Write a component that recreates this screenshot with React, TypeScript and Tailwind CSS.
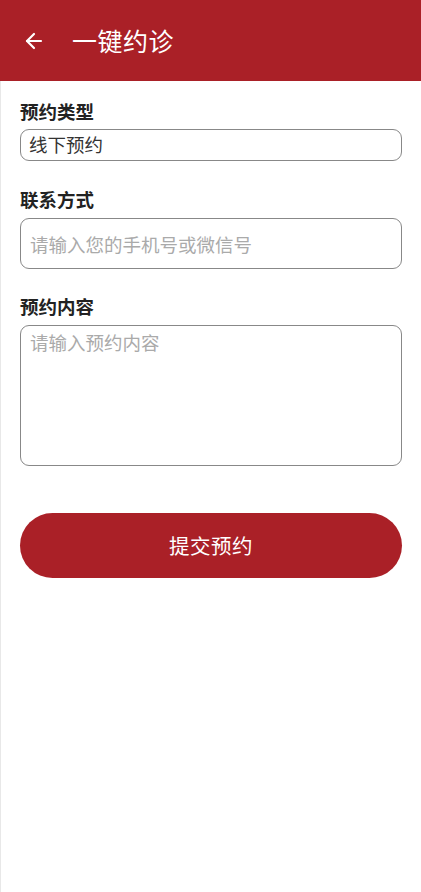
import { ArrowLeft } from "lucide-react";

const font = { fontFamily: '"Noto Sans CJK SC", "Noto Sans", sans-serif' };

export default function App() {
    return (
        <div className="min-h-[892px] w-[421px] bg-white flex flex-col" style={font}>
            <div className="h-[81px] bg-[#aa2027] flex items-center pl-[22px]">
                <ArrowLeft className="w-[24px] h-[24px] text-white" strokeWidth={2.2} />
                <h1 className="ml-[26px] text-white text-[25px] leading-none tracking-[0.5px]">一键约诊</h1>
            </div>

            <div className="flex-1 border-l border-[#e8e8e8] px-[19px] pt-[17px] flex flex-col">
                <label className="text-[18.5px] font-bold text-[#222] leading-[26px]">预约类型</label>
                <div className="mt-[5px] h-[32px] border-[1.5px] border-[#888] rounded-[9px] flex items-center px-[8px] text-[18.5px] text-[#333]">
                    线下预约
                </div>

                <label className="mt-[25px] text-[18.5px] font-bold text-[#222] leading-[26px]">联系方式</label>
                <input
                    type="text"
                    placeholder="请输入您的手机号或微信号"
                    className="mt-[6px] h-[51px] border-[1.5px] border-[#888] rounded-[9px] px-[9px] text-[18.5px] text-[#333] placeholder:text-[#aaa] outline-none"
                />

                <label className="mt-[24px] text-[18.5px] font-bold text-[#222] leading-[26px]">预约内容</label>
                <textarea
                    placeholder="请输入预约内容"
                    className="mt-[6px] h-[141px] border-[1.5px] border-[#888] rounded-[9px] px-[9px] py-[3px] text-[18.5px] text-[#333] placeholder:text-[#aaa] outline-none resize-none"
                />

                <button className="mt-[47px] h-[65px] rounded-full bg-[#aa2027] text-white text-[20.5px] tracking-[0.5px]">
                    提交预约
                </button>
            </div>
        </div>
    );
}
